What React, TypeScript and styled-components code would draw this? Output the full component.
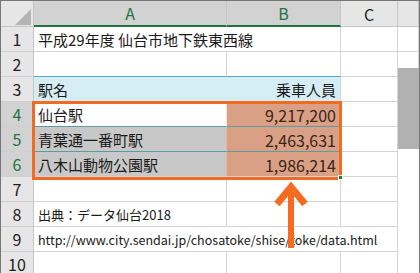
import { Fragment } from "react";
import styled, { createGlobalStyle } from "styled-components";

const GlobalStyle = createGlobalStyle`
  body {
    margin: 0;
    background: #fff;
    font-family: "Noto Sans CJK JP", "Noto Sans", sans-serif;
  }
`;

const Sheet = styled.div`
  position: relative;
  width: 420px;
  height: 273px;
  box-sizing: border-box;
  border: 1px solid #767676;
  border-bottom: 0;
  overflow: hidden;
  background: #fff;
`;

const Grid = styled.div`
  display: grid;
  grid-template-columns: 33px 193px 114px 57px 21px;
  grid-template-rows: 26px;
  grid-auto-rows: 25px;
`;

const HeadCell = styled.div<{ $active?: boolean }>`
  box-sizing: border-box;
  display: flex;
  align-items: center;
  justify-content: center;
  position: relative;
  font-size: 16px;
  color: ${(p) => (p.$active ? "#217346" : "#222")};
  background: ${(p) => (p.$active ? "#d2d2d2" : "#e6e6e6")};
  border-right: 1px solid #c6c6c6;
  border-bottom: ${(p) => (p.$active ? "2px solid #217346" : "1px solid #c6c6c6")};
`;

const Corner = styled(HeadCell)`
  svg {
    position: absolute;
    right: 2px;
    bottom: 1px;
  }
`;

const RowHead = styled.div<{ $active?: boolean }>`
  box-sizing: border-box;
  display: flex;
  align-items: center;
  justify-content: center;
  font-size: 16px;
  color: ${(p) => (p.$active ? "#217346" : "#222")};
  background: ${(p) => (p.$active ? "#d2d2d2" : "#e6e6e6")};
  border-right: 1px solid #c6c6c6;
  border-bottom: 1px solid #cfcfcf;
`;

const Cell = styled.div<{
  $bg?: string;
  $right?: boolean;
  $span?: number;
  $size?: number;
  $rc?: string;
  $bc?: string;
}>`
  box-sizing: border-box;
  display: flex;
  align-items: center;
  justify-content: ${(p) => (p.$right ? "flex-end" : "flex-start")};
  padding: 1px 4px 0 4px;
  font-size: ${(p) => p.$size ?? 15}px;
  color: ${(p) => (p.$right && p.$bg === SALMON ? "#3b2418" : "#1a1a1a")};
  white-space: nowrap;
  background: ${(p) => p.$bg ?? "#fff"};
  border-right: 1px solid ${(p) => p.$rc ?? "#d4d4d4"};
  border-bottom: 1px solid ${(p) => p.$bc ?? "#d4d4d4"};
  grid-column: span ${(p) => p.$span ?? 1};
`;

const Selection = styled.div`
  position: absolute;
  left: 31px;
  top: 100px;
  width: 310px;
  height: 79px;
  box-sizing: border-box;
  border: 3px solid #f26b22;
  pointer-events: none;
`;

const FillHandle = styled.div`
  position: absolute;
  left: 337px;
  top: 174px;
  width: 5px;
  height: 5px;
  box-sizing: border-box;
  background: #217346;
  border: 1px solid #fff;
`;

const Shade = styled.div`
  position: absolute;
  left: 397px;
  top: 67px;
  width: 21px;
  bottom: 0;
  background: #fff;
  &::before {
    content: "";
    display: block;
    height: 81px;
    background: #b1b1b1;
  }
`;

const Arrow = styled.svg`
  position: absolute;
  left: -1px;
  top: -1px;
  pointer-events: none;
`;

const CYAN = "#d5edf4";
const TEAL = "#4bacc6";
const SALMON = "#d9a086";
const GRAY = "#c8c8c8";
const MID = "#5e9a9e";

type CellDef = {
  text?: string;
  bg?: string;
  right?: boolean;
  span?: number;
  size?: number;
  rc?: string;
  bc?: string;
};

const rows: { n: number; active?: boolean; cells: CellDef[] }[] = [
  { n: 1, cells: [{ text: "平成29年度 仙台市地下鉄東西線", span: 2 }, {}, {}] },
  { n: 2, cells: [{ bc: TEAL }, { bc: TEAL }, {}, {}] },
  {
    n: 3,
    cells: [
      { text: "駅名", bg: CYAN, rc: CYAN },
      { text: "乗車人員", bg: CYAN, right: true },
      {},
      {},
    ],
  },
  {
    n: 4,
    active: true,
    cells: [
      { text: "仙台駅", rc: "#f4e4dc", bc: MID },
      { text: "9,217,200", bg: SALMON, right: true, bc: MID, size: 16 },
      {},
      {},
    ],
  },
  {
    n: 5,
    active: true,
    cells: [
      { text: "青葉通一番町駅", bg: GRAY, rc: "#e2b8a4", bc: MID },
      { text: "2,463,631", bg: SALMON, right: true, bc: MID, size: 16 },
      {},
      {},
    ],
  },
  {
    n: 6,
    active: true,
    cells: [
      { text: "八木山動物公園駅", bg: GRAY, rc: "#e2b8a4" },
      { text: "1,986,214", bg: SALMON, right: true, size: 16 },
      {},
      {},
    ],
  },
  { n: 7, cells: [{}, {}, {}, {}] },
  { n: 8, cells: [{ text: "出典：データ仙台2018", size: 13 }, {}, {}, {}] },
  {
    n: 9,
    cells: [
      {
        text: "http://www.city.sendai.jp/chosatoke/shise/toke/data.html",
        size: 12.5,
        span: 3,
      },
      {},
    ],
  },
  { n: 10, cells: [{}, {}, {}, {}] },
];

const App = () => {
  return (
    <>
      <GlobalStyle />
      <Sheet>
        <Grid>
          <Corner>
            <svg width="16" height="16" viewBox="0 0 16 16">
              <polygon points="16,0 16,16 0,16" fill="#b4b4b4" />
            </svg>
          </Corner>
          <HeadCell $active>A</HeadCell>
          <HeadCell $active>B</HeadCell>
          <HeadCell>C</HeadCell>
          <HeadCell />
          {rows.map((r) => (
            <Fragment key={r.n}>
              <RowHead $active={r.active}>{r.n}</RowHead>
              {r.cells.map((c, i) => (
                <Cell
                  key={i}
                  $bg={c.bg}
                  $right={c.right}
                  $span={c.span}
                  $size={c.size}
                  $rc={c.rc}
                  $bc={c.bc}
                >
                  {c.text}
                </Cell>
              ))}
            </Fragment>
          ))}
        </Grid>
        <Shade />
        <Selection />
        <FillHandle />
        <Arrow width="420" height="273" viewBox="0 0 420 273">
          <polyline
            points="277,204 291,187 305,204"
            fill="none"
            stroke="#f36c21"
            strokeWidth="7"
            strokeLinejoin="miter"
          />
          <line x1="291" y1="186" x2="291" y2="248" stroke="#f36c21" strokeWidth="6" />
        </Arrow>
      </Sheet>
    </>
  );
};

export default App;
